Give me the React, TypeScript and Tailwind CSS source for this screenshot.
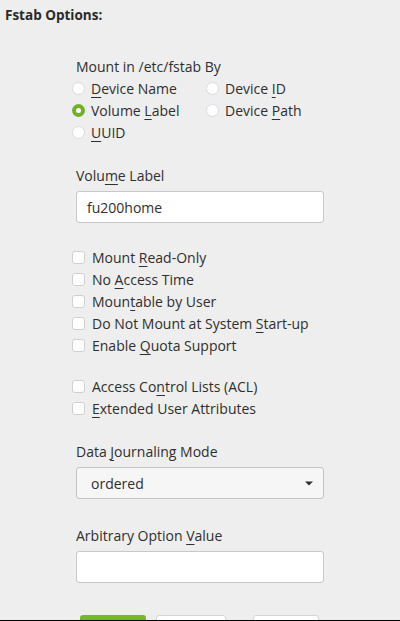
import React from "react";

const font = { fontFamily: '"Open Sans", "Noto Sans", sans-serif' };

function Radio({ checked }: { checked?: boolean }) {
  if (checked) {
    return (
      <span className="w-[13px] h-[13px] rounded-full bg-[#6fb227] flex items-center justify-center shrink-0">
        <span className="w-[5px] h-[5px] rounded-full bg-white" />
      </span>
    );
  }
  return <span className="w-[13px] h-[13px] rounded-full bg-white border border-[#d8dce3] shrink-0" />;
}

function Check() {
  return <span className="w-[13px] h-[13px] rounded-[3px] bg-white border border-[#d0d0d0] shrink-0" />;
}

// text with one underlined mnemonic letter
function Mn({ pre, key_, post }: { pre: string; key_: string; post: string }) {
  return (
    <span className="whitespace-nowrap">
      {pre}
      <u className="underline underline-offset-[3px] decoration-1">{key_}</u>
      {post}
    </span>
  );
}

function RadioRow({ checked, children }: { checked?: boolean; children: React.ReactNode }) {
  return (
    <div className="h-[22px] flex items-center gap-[6px]">
      <Radio checked={checked} />
      {children}
    </div>
  );
}

function CheckRow({ children }: { children: React.ReactNode }) {
  return (
    <div className="h-[22px] flex items-center gap-[7px]">
      <Check />
      {children}
    </div>
  );
}

export default function App() {
  return (
    <div
      className="w-[400px] h-[621px] bg-[#eeeeee] text-[#2f2f2f] overflow-hidden border-b border-black text-[14px] whitespace-nowrap"
      style={font}
    >
      <div className="h-[30px] leading-[30px] pl-[5px] font-bold text-[13.5px] text-[#2a2a2a]">Fstab Options:</div>

      <div className="w-[248px] ml-[76px]">
        <div className="mt-[26px] h-[21px] leading-[21px]">Mount in /etc/fstab By</div>

        <div className="grid grid-cols-[134px_1fr] -ml-[4px]">
          <RadioRow>
            <Mn pre="" key_="D" post="evice Name" />
          </RadioRow>
          <RadioRow>
            <Mn pre="Device " key_="I" post="D" />
          </RadioRow>
          <RadioRow checked>
            <Mn pre="Volume " key_="L" post="abel" />
          </RadioRow>
          <RadioRow>
            <Mn pre="Device " key_="P" post="ath" />
          </RadioRow>
          <RadioRow>
            <Mn pre="" key_="U" post="UID" />
          </RadioRow>
        </div>

        <div className="mt-[22px] h-[22px] leading-[22px]">
          <Mn pre="Volu" key_="m" post="e Label" />
        </div>
        <div className="mt-[4px] h-[32px] bg-white border border-[#c8c8c8] rounded-[3px] flex items-center px-[10px]">
          fu200home
        </div>

        <div className="mt-[23px] -ml-[4px]">
          <CheckRow>
            <Mn pre="Mount " key_="R" post="ead-Only" />
          </CheckRow>
          <CheckRow>
            <Mn pre="No " key_="A" post="ccess Time" />
          </CheckRow>
          <CheckRow>
            <Mn pre="Moun" key_="t" post="able by User" />
          </CheckRow>
          <CheckRow>
            <Mn pre="Do Not Mount at System " key_="S" post="tart-up" />
          </CheckRow>
          <CheckRow>
            <Mn pre="Enable " key_="Q" post="uota Support" />
          </CheckRow>
        </div>

        <div className="mt-[19px] -ml-[4px]">
          <CheckRow>
            <Mn pre="Access Co" key_="n" post="trol Lists (ACL)" />
          </CheckRow>
          <CheckRow>
            <Mn pre="" key_="E" post="xtended User Attributes" />
          </CheckRow>
        </div>

        <div className="mt-[22px] h-[22px] leading-[22px]">
          <Mn pre="Data " key_="J" post="ournaling Mode" />
        </div>
        <div className="mt-[4px] h-[32px] bg-[#f6f6f6] border border-[#c4c4c4] rounded-[3px] flex items-center justify-between pl-[14px] pr-[10px]">
          <span>ordered</span>
          <svg width="8" height="5" viewBox="0 0 8 5">
            <path d="M0 0.5h8L4 4.5z" fill="#2f2f2f" />
          </svg>
        </div>

        <div className="mt-[26px] h-[22px] leading-[22px]">
          <Mn pre="Arbitrary Option " key_="V" post="alue" />
        </div>
        <div className="mt-[4px] h-[32px] bg-white border border-[#c8c8c8] rounded-[3px]" />

        <div className="mt-[32px] flex">
          <div className="ml-[4px] w-[66px] h-[30px] bg-[#73ba25] rounded-[3px]" />
          <div className="ml-[10px] w-[70px] h-[30px] bg-white border border-[#d4d4d4] rounded-[3px]" />
          <div className="ml-[27px] w-[66px] h-[30px] bg-white border border-[#d4d4d4] rounded-[3px]" />
        </div>
      </div>
    </div>
  );
}
